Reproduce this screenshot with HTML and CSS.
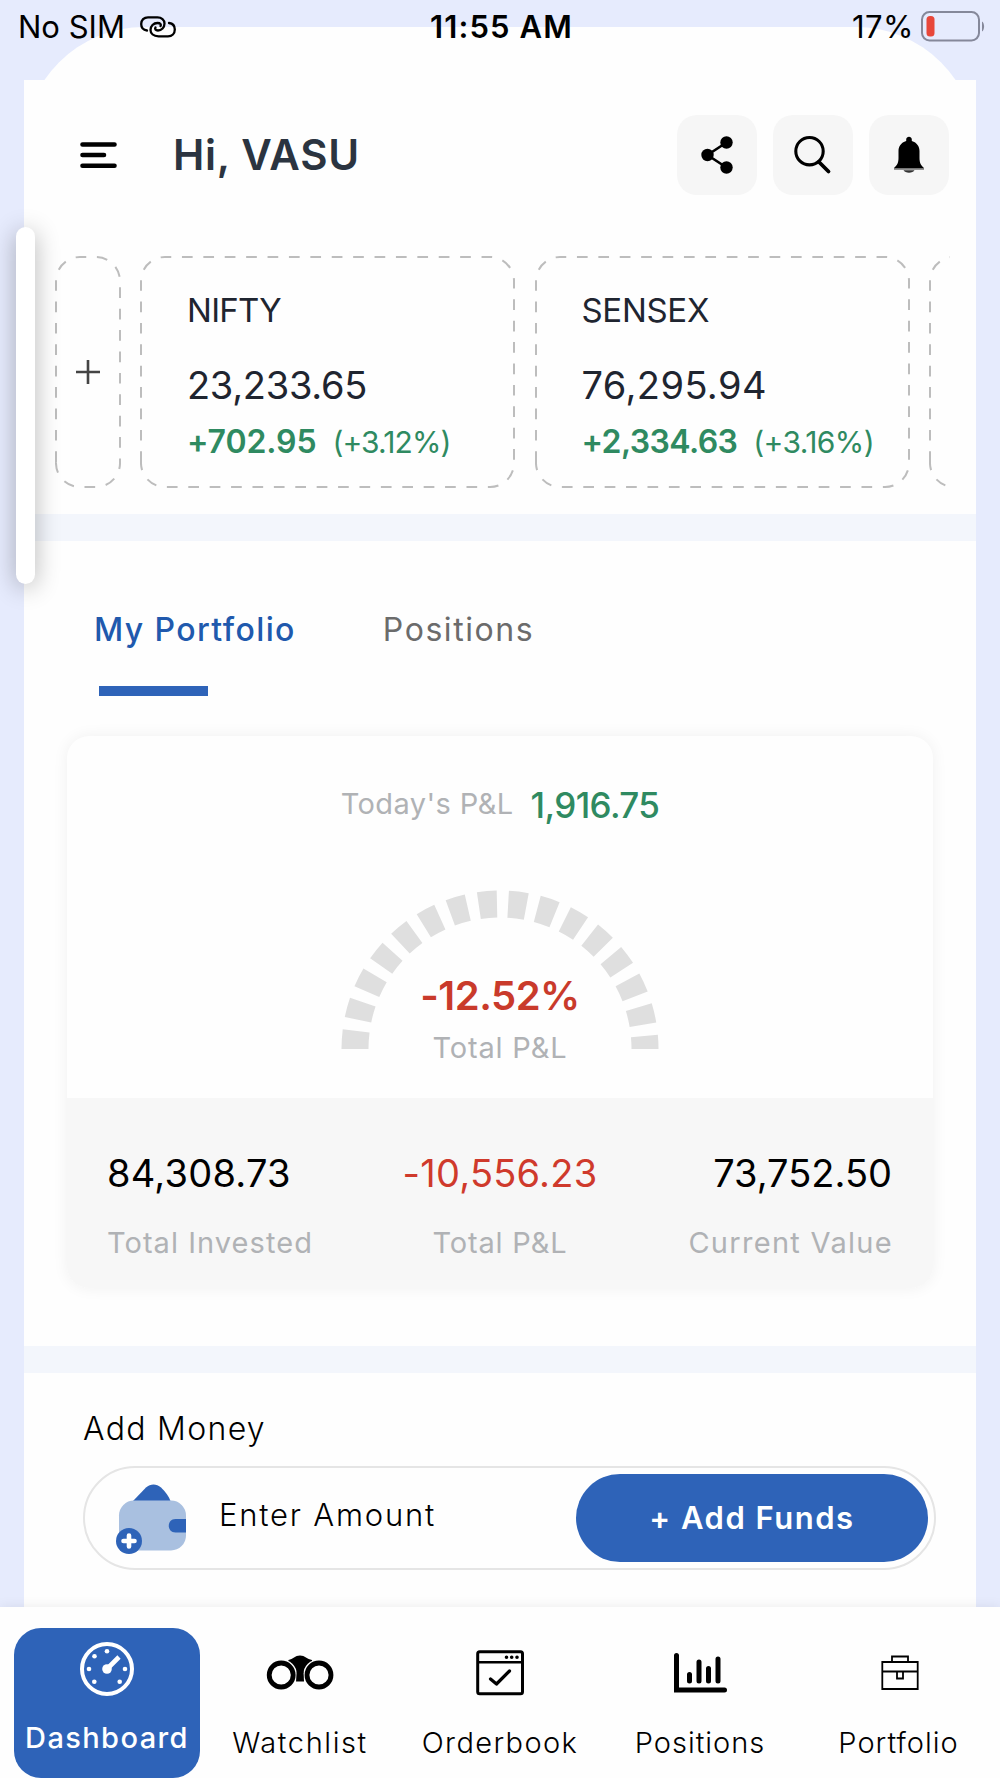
FILE: index.html
```html
<!DOCTYPE html>
<html>
	<head>
		<meta charset="UTF-8">
		<title>Dashboard</title>
		<link rel="stylesheet" href="styles.css">
	</head>
	<body>
		<div class="phone">
			<!-- status bar -->
			<div class="status">
				<div class="status-left">
					<span class="sim">No SIM</span>
					<svg width="36" height="22" viewBox="0 0 36 22" fill="none" stroke="#000" stroke-width="2.3" stroke-linecap="round">
						<path d="M7 14.500C3 14 1.200 11.500 1.200 8C1.200 4 4 1.300 8 1.300H17.500C21.500 1.300 24.500 4 24.500 7.500C24.500 11.500 21.500 14.500 18 14.500C15.500 14.500 14.500 13 15.500 11.500"/>
						<path d="M29 7C33 7.500 34.800 10 34.800 13.500C34.800 17.500 32 20.300 28 20.300H18.500C13.500 20.300 10.500 17.500 10.500 14C10.500 10 13.500 7 17.500 7C20.500 7 21.500 8.500 20.500 10"/>
					</svg>
				</div>
				<div class="clock">11:55 AM</div>
				<div class="status-right">
					<span class="percent">17%</span>
					<svg width="64" height="31" viewBox="0 0 64 31">
						<rect x="1" y="1" width="57" height="28.500" rx="7.500" fill="none" stroke="#85889a" stroke-width="2"/>
						<rect x="5.500" y="5" width="8" height="20.500" rx="3.500" fill="#e8473a"/>
						<path d="M61 10.500C63.800 12 63.800 19 61 20.500Z" fill="#85889a"/>
					</svg>
				</div>
			</div>
			<div class="cap"></div>

			<div class="sheet">
				<div class="header">
					<svg class="menu" width="37" height="28" viewBox="0 0 37 28" stroke="#000" stroke-width="4.600" stroke-linecap="round">
						<path d="M2.500 3.500H34.500M2.500 14H24M2.500 24.800H34.500"/>
					</svg>
					<h1>Hi, VASU</h1>
					<div class="tools">
						<a class="tool">
							<svg width="80" height="80" viewBox="0 0 80 80">
								<path d="M49.500 27.500L30.500 40L49.500 52.500" fill="none" stroke="#000" stroke-width="2.600"/>
								<circle cx="49.500" cy="27.500" r="6.200"/><circle cx="30.500" cy="40" r="6.200"/><circle cx="49.500" cy="52.500" r="6.200"/>
							</svg>
						</a>
						<a class="tool">
							<svg width="80" height="80" viewBox="0 0 80 80" fill="none" stroke="#000">
								<circle cx="36.500" cy="36.200" r="13.700" stroke-width="3.100"/>
								<path d="M46 47L55.500 56.500" stroke-width="3.800" stroke-linecap="round"/>
							</svg>
						</a>
						<a class="tool">
							<svg width="80" height="80" viewBox="0 0 80 80">
								<path d="M37.200 24.500C37.200 20.800 42.800 20.800 42.800 24.500V26C48 27.500 50.500 31.500 50.500 36V43C50.500 48 52 50.500 55 53H25C28 50.500 29.500 48 29.500 43V36C29.500 31.500 32 27.500 37.200 26Z"/>
								<path d="M25 53.200H55V54.600H25Z" fill="#555"/>
								<path d="M34.500 55.300H45.500C44 58.600 36 58.600 34.500 55.300Z" fill="#333"/>
							</svg>
						</a>
					</div>
				</div>

				<div class="tickers">
					<div class="ticker plus">
						<svg class="dash" width="66" height="232"><path d="M1 206V26A24 24 0 0 1 25 1H41A24 24 0 0 1 65 26V206A24 24 0 0 1 41 231H25A24 24 0 0 1 1 206Z"/></svg>
						<svg width="24" height="24" viewBox="0 0 24 24" stroke="#444" stroke-width="2.600"><path d="M0 12H24M12 0V24"/></svg>
					</div>
					<div class="ticker nifty">
						<svg class="dash" width="375" height="232"><path d="M1 206V26A24 24 0 0 1 25 1H350A24 24 0 0 1 374 26V206A24 24 0 0 1 350 231H25A24 24 0 0 1 1 206Z"/></svg>
						<div class="name">NIFTY</div>
						<div class="price">23,233.65</div>
						<div class="change"><b>+702.95</b><span>(+3.12%)</span></div>
					</div>
					<div class="ticker sensex">
						<svg class="dash" width="375" height="232"><path d="M1 206V26A24 24 0 0 1 25 1H350A24 24 0 0 1 374 26V206A24 24 0 0 1 350 231H25A24 24 0 0 1 1 206Z"/></svg>
						<div class="name">SENSEX</div>
						<div class="price">76,295.94</div>
						<div class="change"><b>+2,334.63</b><span>(+3.16%)</span></div>
					</div>
					<div class="ticker">
						<svg class="dash" width="375" height="232"><path d="M1 206V26A24 24 0 0 1 25 1H350A24 24 0 0 1 374 26V206A24 24 0 0 1 350 231H25A24 24 0 0 1 1 206Z"/></svg>
					</div>
				</div>

				<div class="band"></div>

				<div class="portfolio">
					<div class="tabs">
						<a class="tab ac">My Portfolio</a>
						<a class="tab">Positions</a>
					</div>
					<div class="card">
						<div class="today">
							<span class="label">Today's P&amp;L</span>
							<span class="gain">1,916.75</span>
						</div>
						<div class="gauge">
							<svg width="318" height="159" viewBox="0 0 318 159">
								<path d="M14 159A145 145 0 0 1 304 159" fill="none" stroke="#dfdfdf" stroke-width="27" stroke-dasharray="18.200 11.280"/>
							</svg>
							<div class="gauge-text">
								<div class="loss">-12.52%</div>
								<div class="label">Total P&amp;L</div>
							</div>
						</div>
						<div class="totals">
							<div class="total">
								<div class="sum">84,308.73</div>
								<div class="label">Total Invested</div>
							</div>
							<div class="total mid">
								<div class="sum red">-10,556.23</div>
								<div class="label">Total P&amp;L</div>
							</div>
							<div class="total last">
								<div class="sum">73,752.50</div>
								<div class="label">Current Value</div>
							</div>
						</div>
					</div>
				</div>

				<div class="band"></div>

				<div class="money">
					<h2>Add Money</h2>
					<div class="amount">
						<svg width="72" height="72" viewBox="0 0 72 72">
							<path d="M17 18L30 4.500C34.500 0.500 40.500 0.500 45 4.500C50 9 53 14 54.500 18Z" fill="#2e63b8"/>
							<rect x="3" y="17.500" width="67" height="50" rx="15" fill="#a9c0e0"/>
							<path d="M70 36V49.500H59.500C50.500 49.500 50.500 36 59.500 36Z" fill="#2e63b8"/>
							<circle cx="13" cy="58" r="13" fill="#2e63b8"/>
							<path d="M13 52.500V63.500M7.500 58H18.500" stroke="#fff" stroke-width="4.600" stroke-linecap="round"/>
						</svg>
						<span class="enter">Enter Amount</span>
						<a class="add">+ Add Funds</a>
					</div>
				</div>
			</div>

			<!-- side handle -->
			<div class="handle"></div>

			<div class="nav">
				<a class="item ac">
					<svg width="54" height="54" viewBox="0 0 54 54" fill="#fff">
						<circle cx="27" cy="27" r="25" fill="none" stroke="#fff" stroke-width="4"/>
						<circle cx="27" cy="27" r="4.800"/>
						<path d="M27 27L39 15" stroke="#fff" stroke-width="4.600"/>
						<circle cx="27" cy="9.200" r="2.300"/><circle cx="14.500" cy="14.300" r="2.300"/><circle cx="9" cy="27" r="2.300"/>
						<circle cx="45" cy="27" r="2.300"/><circle cx="14.300" cy="39.700" r="2.300"/><circle cx="39.700" cy="39.700" r="2.300"/>
					</svg>
					<span>Dashboard</span>
				</a>
				<a class="item watch">
					<svg width="68" height="54" viewBox="0 0 68 54">
						<path d="M22.500 15C27 14 29 10.500 34 10.500C39 10.500 41 14 46 15L47 22L38 28H30L21 22Z"/>
						<circle cx="15.200" cy="30" r="15.800" fill="#fefefe"/><circle cx="53" cy="30" r="15.800" fill="#fefefe"/>
						<path d="M31 22H37.300L38 36.500H30Z"/>
						<circle cx="15.200" cy="30" r="12" fill="none" stroke="#000" stroke-width="4.800"/>
						<circle cx="53" cy="30" r="12" fill="none" stroke="#000" stroke-width="4.800"/>
					</svg>
					<span>Watchlist</span>
				</a>
				<a class="item order">
					<svg width="48" height="54" viewBox="0 0 48 54" fill="none" stroke="#000">
						<rect x="1.700" y="6.700" width="44.800" height="42" rx="2" stroke-width="3"/>
						<path d="M1.500 17.200H46.500" stroke-width="2.600"/>
						<path d="M14.500 34L20.500 39L33.500 26" stroke-width="3.200" stroke-linecap="round" stroke-linejoin="round"/>
						<path d="M30.500 12.300h.01M35.700 12.300h.01M41 12.300h.01" stroke-width="3.600" stroke-linecap="round"/>
					</svg>
					<span>Orderbook</span>
				</a>
				<a class="item pos">
					<svg width="53" height="54" viewBox="0 0 53 54" fill="none" stroke="#000" stroke-width="5" stroke-linecap="round">
						<path d="M2.500 10.500V45H50.500"/>
						<path d="M15.500 29.500V36M25 17V36M34.500 23.500V36M44 14V36"/>
					</svg>
					<span>Positions</span>
				</a>
				<a class="item port">
					<svg width="38" height="54" viewBox="0 0 38 54" fill="none" stroke="#000" stroke-width="1.800">
						<path d="M1.300 17H36.700V44H1.300ZM11 17V11.500H27V17M1.300 26.500H36.700M16 26.500V33.500H22V26.500"/>
					</svg>
					<span>Portfolio</span>
				</a>
			</div>
		</div>
	</body>
</html>
```
FILE: styles.css
```css
* {margin:0; padding:0; box-sizing:border-box; }
svg{display:block; flex:none; }
a{text-decoration:none; color:inherit; }

body{background:#e6ebfd; font-family:"Inter","Liberation Sans",sans-serif; color:#000; white-space:nowrap; }
.phone{width:1000px; height:1778px; padding-top:27px; position:relative; overflow:hidden; background:#e6ebfd; }

/* status bar */
.status{position:absolute; left:0; top:0; width:1000px; height:54px; z-index:2; padding:0 15px 0 18px; display:grid; grid-template-columns:1fr auto 1fr; align-items:center; font-size:31px; line-height:54px; }
.status-left,.status-right{display:flex; align-items:center; }
.status-left{gap:15px; }
.status-right{justify-content:flex-end; gap:7px; }
.status-right svg{margin-bottom:2px; }
.percent{letter-spacing:0.5px; }
.clock{font-weight:600; letter-spacing:1.1px; }
.cap{height:53px; margin:0 24px; overflow:hidden; }
.cap::before{content:""; display:block; height:240px; border-radius:120px; background:#fefefe; }

.sheet{width:952px; height:1527px; margin:0 24px; background:#fefefe; }
.band{height:27px; background:#f3f6fc; }

/* header */
.header{height:150px; padding:0 27px 0 56px; display:flex; align-items:center; }
.header h1{margin-left:56px; font-size:42px; font-weight:600; line-height:52px; letter-spacing:0.7px; color:#2b3440; }
.menu,.header h1{margin-bottom:1px; }
.tools{margin-left:auto; display:flex; gap:16px; }
.tool{width:80px; height:80px; border-radius:20px; background:#f6f6f6; }

/* tickers */
.tickers{height:284px; margin:0 26px 0 31px; padding-top:26px; display:flex; overflow:hidden; }
.ticker{position:relative; flex:none; width:375px; height:232px; margin-right:19.5px; padding:35px 0 0 47px; color:#1f2530; }
.ticker.plus{width:66px; margin-right:19px; padding:104px 0 0 21px; }
.dash{position:absolute; left:0; top:0; }
.dash path{fill:none; stroke:#bdbdbd; stroke-width:2; stroke-dasharray:10.7; }
.name{font-size:33px; line-height:38px; }
.price{margin-top:31px; font-size:38px; line-height:50px; }
.change{display:flex; gap:16px; margin-top:12px; line-height:40px; color:#2f8a61; }
.change b{font-size:32px; font-weight:600; }
.change span{font-size:30px; font-weight:400; }
.nifty .name{letter-spacing:-0.7px; }
.nifty .price{letter-spacing:-0.3px; }
.nifty b{letter-spacing:-0.1px; }
.nifty span{letter-spacing:-0.9px; }
.sensex .name{letter-spacing:-0.3px; }
.sensex .price{letter-spacing:0.4px; }
.sensex b{letter-spacing:-0.6px; }
.sensex span{letter-spacing:-0.6px; }

/* portfolio */
.portfolio{height:805px; padding:65px 43px 0; }
.tabs{display:flex; gap:87px; height:130px; padding-left:27px; font-size:32px; line-height:48px; letter-spacing:1.55px; color:#6b6b6b; }
.tab.ac{color:#2059ad; font-weight:500; letter-spacing:1.4px; }
.tab.ac::after{content:""; display:block; width:109px; height:10px; margin:32px 0 0 5px; background:#2e63b8; }
.card{height:552px; border-radius:22px; background:#fefefe; box-shadow:0 0 16px rgba(0,0,0,0.06); overflow:hidden; }
.label{font-size:29px; line-height:40px; letter-spacing:0.8px; color:#b0b2b5; }
.today{height:154px; padding-top:48px; display:flex; justify-content:center; gap:17px; line-height:40px; }
.today .label{letter-spacing:0.4px; }
.gain{font-size:35px; font-weight:500; line-height:42px; letter-spacing:-0.6px; color:#2f8a61; }
.gauge{height:208px; display:flex; justify-content:center; position:relative; }
.gauge-text{position:absolute; left:0; right:0; top:81px; text-align:center; }
.loss{font-size:40px; font-weight:600; line-height:50px; letter-spacing:-0.5px; color:#c93a2b; }
.gauge-text .label{margin-top:7px; }
.totals{height:190px; padding:50px 40px 0; display:grid; grid-template-columns:1fr auto 1fr; background:#f7f7f7; }
.total.mid{text-align:center; }
.total.last{text-align:right; }
.sum{font-size:38px; line-height:50px; letter-spacing:0.25px; }
.sum.red{color:#cf3a2c; }
.total .label{margin-top:25px; letter-spacing:1.05px; }
.total.mid .label{letter-spacing:0.8px; }
.total.last .label{letter-spacing:1.3px; }
.total.last .sum{padding-right:1px; letter-spacing:0; }

/* add money */
.money{padding:37px 40px 0 59px; }
.money h2{font-size:32px; font-weight:300; line-height:38px; letter-spacing:1.3px; }
.amount{height:104px; margin-top:18px; padding:0 6px 0 31px; display:flex; align-items:center; border:2px solid #e5e5e5; border-radius:52px; }
.amount svg{margin-top:2px; }
.enter{margin-left:31px; padding-bottom:7px; font-size:31px; font-weight:300; letter-spacing:1.8px; }
.add{width:352px; height:88px; margin-left:auto; border-radius:44px; background:#2e63b8; color:#fff; font-size:31px; font-weight:600; line-height:88px; letter-spacing:1.5px; text-align:center; }

.handle{position:absolute; left:16px; top:227px; width:19px; height:357px; border-radius:10px; background:#fff; box-shadow:0 4px 24px rgba(0,0,0,0.3); }

/* bottom nav */
.nav{position:relative; height:171px; padding-top:21px; display:grid; grid-template-columns:repeat(5,1fr); background:#fefefe; box-shadow:0 0 12px rgba(0,0,0,0.08); font-size:29px; font-weight:300; }
.item{display:flex; flex-direction:column; align-items:center; padding-top:17px; line-height:36px; }
.item span{margin-top:26px; }
.item.ac{width:186px; height:150px; margin-left:14px; padding-top:14px; border-radius:27px; background:#2e63b8; color:#fff; font-weight:500; }
.item.ac span{margin-top:24px; letter-spacing:1.4px; }
.watch{letter-spacing:1.6px; }
.order{letter-spacing:1.4px; }
.pos,.port{letter-spacing:1px; }
.port span{margin-right:3px; }
```
